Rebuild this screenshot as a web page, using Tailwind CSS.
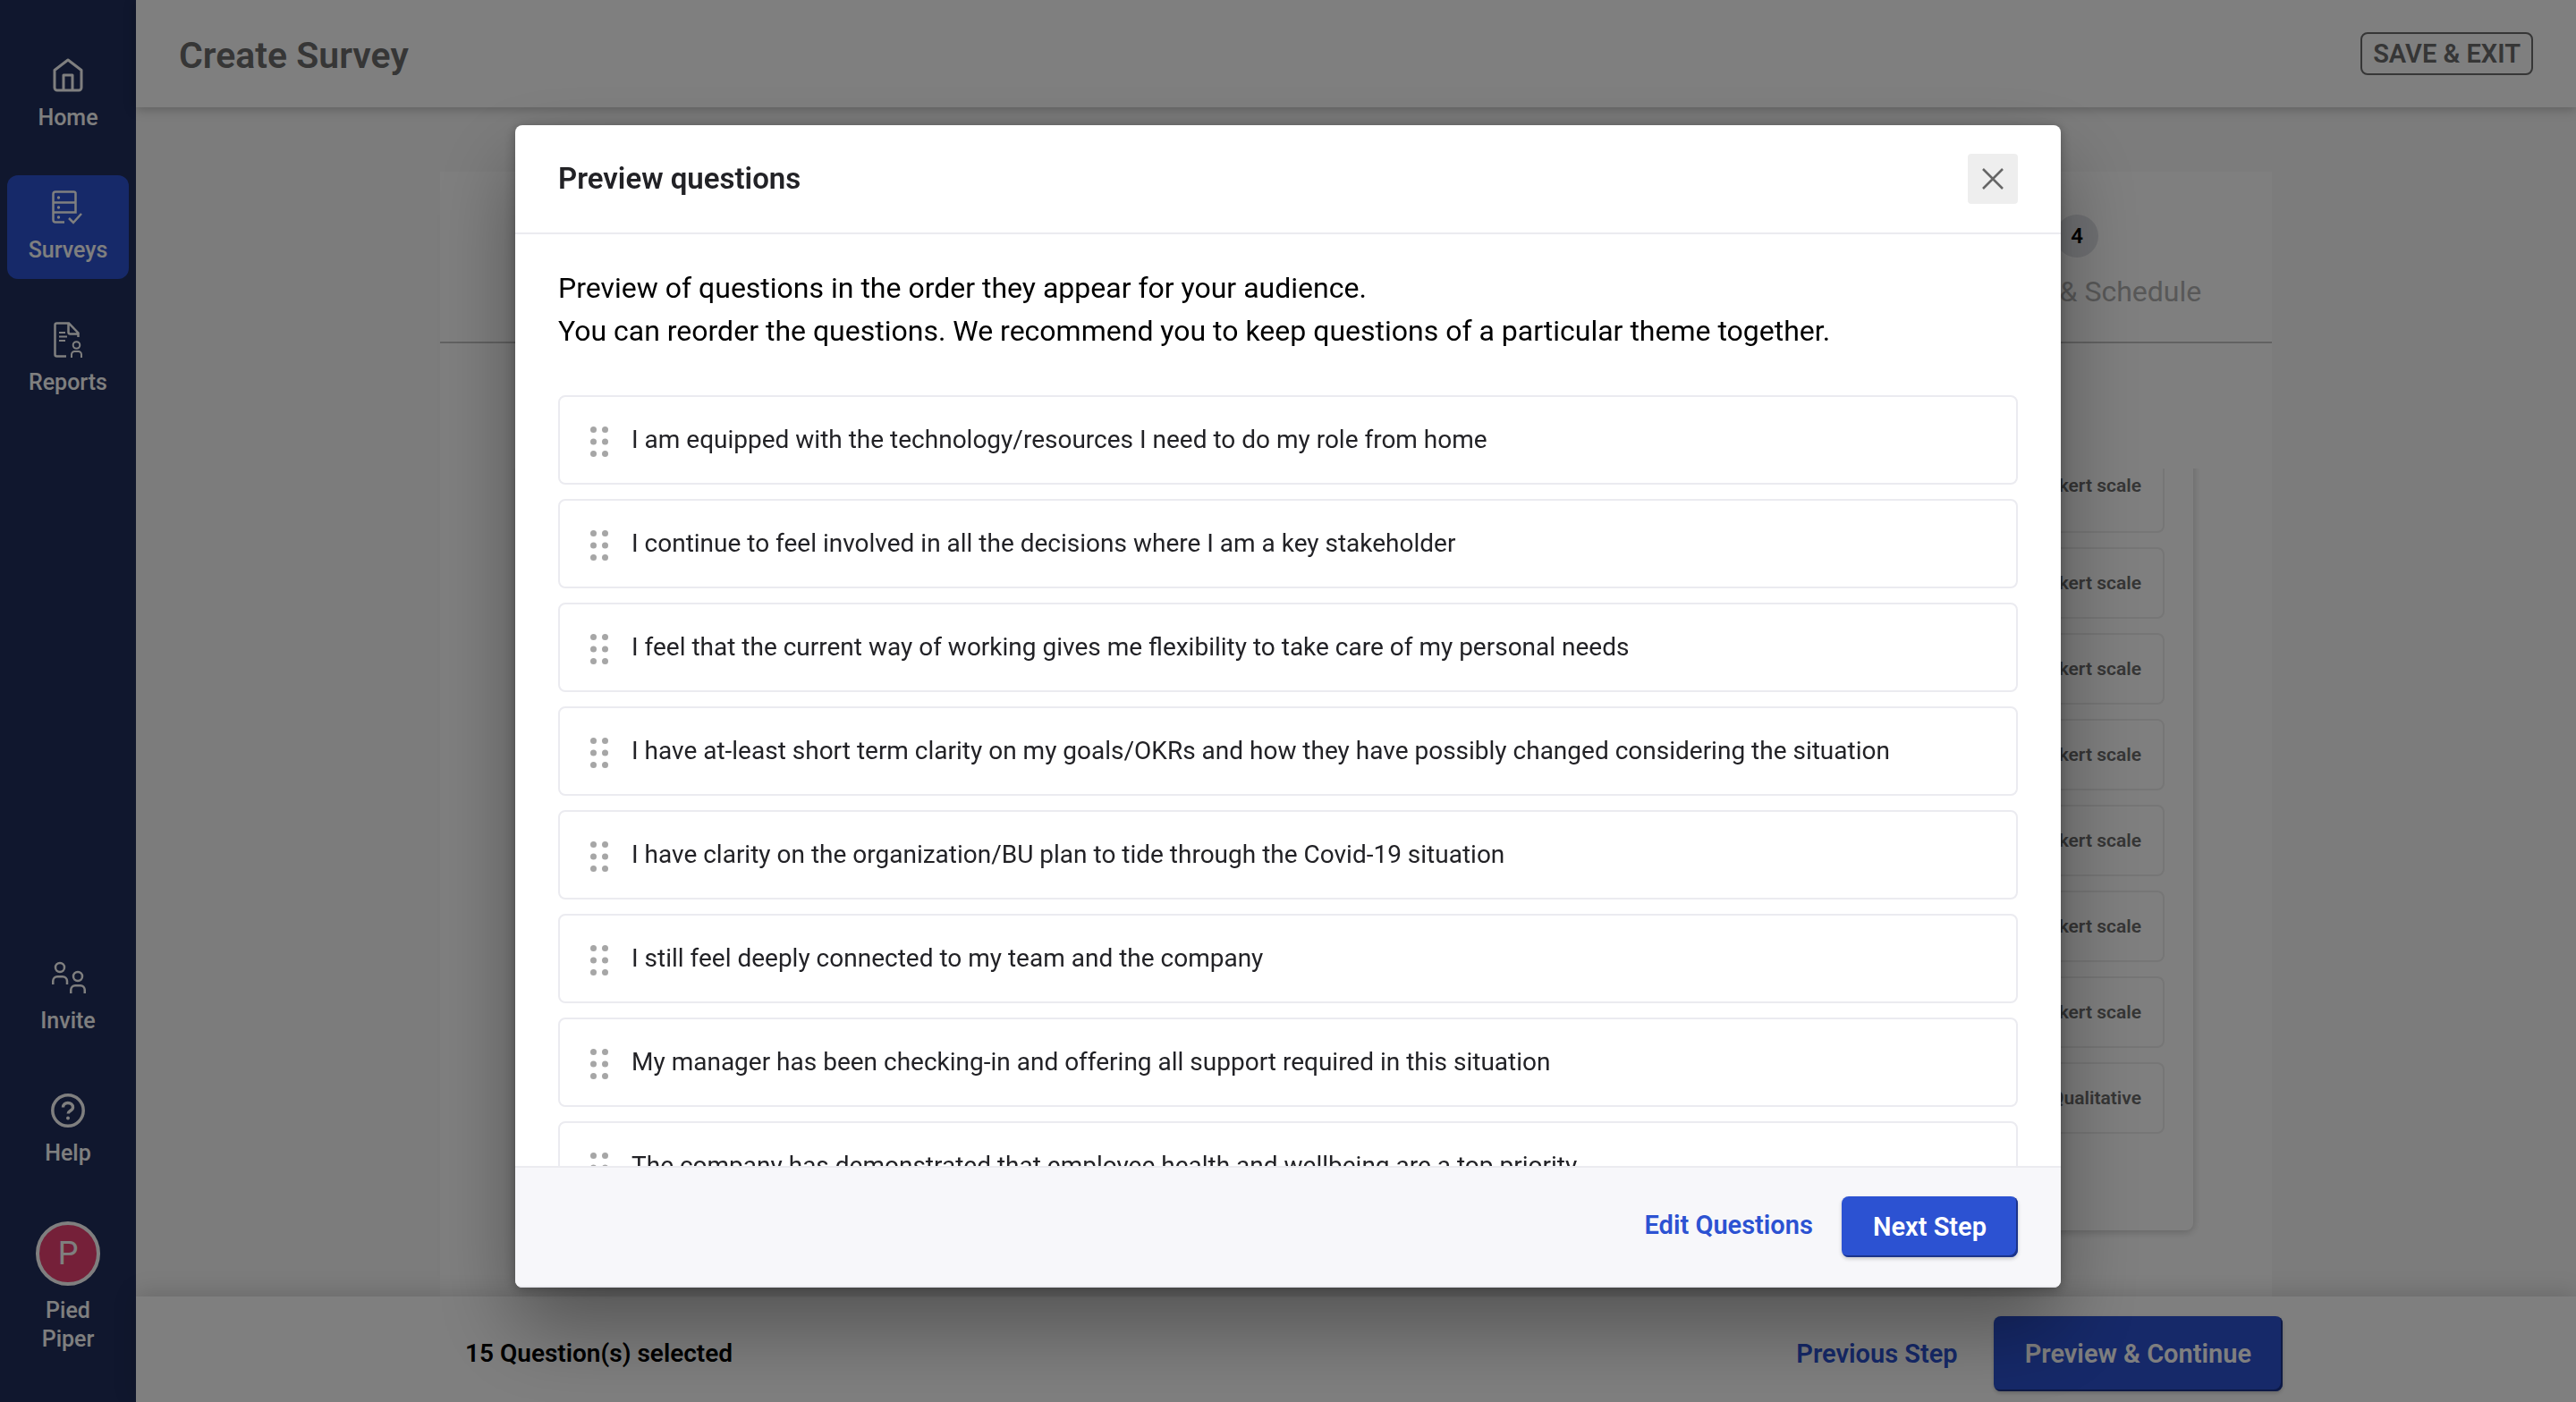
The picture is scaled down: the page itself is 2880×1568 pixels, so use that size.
<!DOCTYPE html>
<html lang="en">
<head>
<meta charset="utf-8">
<title>Create Survey</title>
<script src="https://cdn.jsdelivr.net/npm/@tailwindcss/browser@4"></script>
</head>
<body class="font-[Roboto,sans-serif] text-black">

<div class="flex h-screen overflow-hidden bg-[#f8f8f8]">
  <!-- Sidebar -->
  <nav class="flex w-[152px] shrink-0 flex-col justify-between bg-[#202e5c] px-2 pt-12 pb-[54px] text-center text-[25px] leading-8 font-medium text-white">
    <div class="flex flex-col gap-8">
      <a href="#" class="flex flex-col items-center gap-3 rounded-xl py-4">
        <svg class="size-10" viewBox="0 0 40 40" fill="none" stroke="currentColor" stroke-width="3" stroke-linejoin="round"><path d="M5 14.500 20 3l15 11.500V34a3 3 0 0 1-3 3H8a3 3 0 0 1-3-3zM15 37V20h10v17"/></svg>
        Home
      </a>
      <a href="#" aria-current="page" class="flex flex-col items-center gap-3 rounded-xl bg-[#2c52d2] py-4">
        <svg class="size-10" viewBox="0 0 40 40" fill="none" stroke="currentColor" stroke-width="2.500"><path d="M16 36.500H6a2.500 2.500 0 0 1-2.500-2.500V5A2.500 2.500 0 0 1 6 2.500h20A2 2 0 0 1 28.500 5v20.500H3.500M3.500 14.500h25M21 32l5 5 9-10"/><g fill="currentColor" stroke="none"><circle cx="9.500" cy="9" r="1.700"/><circle cx="9.500" cy="20" r="1.700"/><circle cx="9.500" cy="31" r="1.700"/></g></svg>
        Surveys
      </a>
      <a href="#" class="flex flex-col items-center gap-3 rounded-xl py-4">
        <svg class="size-10" viewBox="0 0 40 40" fill="none" stroke="currentColor" stroke-width="2.500"><path d="M18 38.500H7.500a2 2 0 0 1-2-2v-33a2 2 0 0 1 2-2H21L31.500 12.500V17M20.500 1.500v10a2 2 0 0 0 2 2h9"/><path stroke-width="2" d="M10 12h7M10 16.500h9M10 21h7"/><circle cx="29.500" cy="26" r="3.800" stroke-width="2"/><path stroke-width="2" d="M24 40v-3.500a3.500 3.500 0 0 1 3.500-3.500h4a3.500 3.500 0 0 1 3.500 3.500V40"/></svg>
        Reports
      </a>
    </div>
    <div class="flex flex-col gap-8">
      <a href="#" class="flex flex-col items-center gap-3 rounded-xl py-4">
        <svg class="size-10" viewBox="0 0 40 40" fill="none" stroke="currentColor" stroke-width="2.500"><circle cx="11" cy="8" r="5"/><path d="M3.250 27v-4A5 5 0 0 1 8 18.250h6A5 5 0 0 1 19 23v4"/><circle cx="31" cy="18" r="5"/><path d="M23.250 37v-4A5 5 0 0 1 28 28.250h6A5 5 0 0 1 38.750 33v4"/></svg>
        Invite
      </a>
      <a href="#" class="flex flex-col items-center gap-3 rounded-xl py-4">
        <svg class="size-10" viewBox="0 0 40 40" fill="none" stroke="currentColor" stroke-width="3.500"><circle cx="20" cy="20" r="17.200"/><path d="M14.500 16.500c0-3.200 2.400-5 5.300-5 3.200 0 5.700 1.800 5.700 4.900 0 3.900-5.300 3.700-5.300 7.100" stroke-width="3.400"/><circle cx="20" cy="28.500" r="2" fill="currentColor" stroke="none"/></svg>
        Help
      </a>
      <a href="#" class="flex flex-col items-center gap-3 pt-3">
        <span class="flex size-[72px] items-center justify-center rounded-full border-4 border-white bg-[#ea4072] text-4xl font-normal">P</span>
        <span>Pied<br>Piper</span>
      </a>
    </div>
  </nav>

  <div class="flex min-w-0 flex-1 flex-col">
    <header class="z-10 flex h-[120px] shrink-0 items-center justify-between bg-white px-12 shadow-[0_2px_12px_rgba(0,0,0,0.25)]">
      <h1 class="pt-1 text-[41px] leading-12 font-semibold text-[#6c6c6c]">Create Survey</h1>
      <button type="button" class="h-12 rounded-lg border-2 border-[#6c6c6c] px-3 text-[29px] leading-8 font-semibold text-[#6c6c6c]">SAVE &amp; EXIT</button>
    </header>

    <main class="min-h-0 flex-1 overflow-hidden pt-[72px]">
      <section class="mx-auto h-full max-w-[2048px] bg-white">
        <ol class="flex justify-between border-b-2 border-[#c4c4c4] px-[76px] pt-12 pb-8 text-[32px] leading-12 text-[#b0b0b0]">
          <li class="flex w-[284px] flex-col items-center gap-[14px]"><span class="flex size-12 items-center justify-center rounded-full bg-[#dfe1e6] text-2xl font-semibold text-black">1</span><span>Template</span></li>
          <li class="flex w-[284px] flex-col items-center gap-[14px]"><span class="flex size-12 items-center justify-center rounded-full bg-[#dfe1e6] text-2xl font-semibold text-black">2</span><span>Questions</span></li>
          <li class="flex w-[284px] flex-col items-center gap-[14px]"><span class="flex size-12 items-center justify-center rounded-full bg-[#dfe1e6] text-2xl font-semibold text-black">3</span><span>Audience</span></li>
          <li class="flex w-[284px] flex-col items-center gap-[14px]"><span class="flex size-12 items-center justify-center rounded-full bg-[#dfe1e6] text-2xl font-semibold text-black">4</span><span class="whitespace-nowrap">Preview &amp; Schedule</span></li>
        </ol>
        <div class="mt-[140px] overflow-hidden px-[88px] pb-6">
          <ul id="types" class="-mt-[34px] flex flex-col gap-4 rounded-lg px-8 pb-[108px] text-[21px] leading-6 font-semibold text-[#6c6c6c] shadow-[0_2px_10px_rgba(0,0,0,0.22)]"></ul>
        </div>
      </section>
    </main>

    <footer class="z-10 flex h-[118px] shrink-0 items-center bg-white pt-[10px] pr-[328px] pl-[368px] text-[29px] leading-8 font-semibold shadow-[0_-4px_24px_rgba(0,0,0,0.15)]">
      <p class="text-[28px]">15 Question(s) selected</p>
      <a href="#" class="mr-10 ml-auto text-[#2c52d2]">Previous Step</a>
      <button type="button" class="h-[84px] rounded-lg bg-[#2c52d2] px-[35px] text-white shadow-[inset_-2px_-2px_0_#1b338a,0_2px_4px_rgba(0,0,0,0.2)]">Preview &amp; Continue</button>
    </footer>
  </div>
</div>

<!-- Modal -->
<div class="fixed inset-0 z-20 flex justify-center bg-black/50 pt-[140px] pb-32">
  <div role="dialog" aria-modal="true" aria-labelledby="dialog-title" class="flex w-3/5 flex-col overflow-hidden rounded-lg bg-white shadow-[0_44px_90px_rgba(0,0,0,0.35),0_2px_14px_rgba(0,0,0,0.3)]">
    <header class="flex h-[122px] shrink-0 items-center justify-between border-b-2 border-[#ebebf0] px-12">
      <h2 id="dialog-title" class="text-[33px] leading-10 font-semibold text-[#222226]">Preview questions</h2>
      <button type="button" aria-label="Close" class="flex size-14 items-center justify-center rounded bg-[#eeeeee] text-[#666666]">
        <svg class="size-6" viewBox="0 0 24 24" fill="none" stroke="currentColor" stroke-width="2.500"><path d="m1 1 22 22M23 1 1 23"/></svg>
      </button>
    </header>
    <div class="min-h-0 flex-1 overflow-hidden px-12 pt-9">
      <p class="text-[32px] leading-12">Preview of questions in the order they appear for your audience.<br>You can reorder the questions. We recommend you to keep questions of a particular theme together.</p>
      <ul id="questions" class="mt-12 flex flex-col gap-4 text-[28px] leading-10 text-[#222226]"></ul>
    </div>
    <footer class="flex h-[136px] shrink-0 items-center justify-end gap-8 border-y-2 border-[#ebebf0] bg-[#f7f7fa] px-12 text-[29px] leading-8 font-semibold">
      <a href="#" class="pb-1 text-[#2c52d2]">Edit Questions</a>
      <button type="button" class="h-[68px] rounded-lg bg-[#2c52d2] px-[35px] text-white shadow-[inset_-2px_-2px_0_#1b338a,0_2px_4px_rgba(0,0,0,0.2)]">Next Step</button>
    </footer>
  </div>
</div>

<script>
  const questions = [
    "I am equipped with the technology/resources I need to do my role from home",
    "I continue to feel involved in all the decisions where I am a key stakeholder",
    "I feel that the current way of working gives me flexibility to take care of my personal needs",
    "I have at-least short term clarity on my goals/OKRs and how they have possibly changed considering the situation",
    "I have clarity on the organization/BU plan to tide through the Covid-19 situation",
    "I still feel deeply connected to my team and the company",
    "My manager has been checking-in and offering all support required in this situation",
    "The company has demonstrated that employee health and wellbeing are a top priority"
  ];
  document.getElementById("questions").innerHTML = questions.map(q => `
    <li class="flex h-[100px] shrink-0 items-center gap-[26px] rounded-lg border-2 border-[#ebebf0] px-[34px]">
      <button type="button" aria-label="Reorder" class="text-[#a6a6a6]"><svg class="h-[38px] w-5" viewBox="0 0 20 38" fill="currentColor"><circle cx="3.500" cy="7.500" r="3.500"/><circle cx="16.500" cy="7.500" r="3.500"/><circle cx="3.500" cy="21" r="3.500"/><circle cx="16.500" cy="21" r="3.500"/><circle cx="3.500" cy="34.500" r="3.500"/><circle cx="16.500" cy="34.500" r="3.500"/></svg></button>
      <span>${q}</span>
    </li>`).join("");

  const types = ["Likert scale", "Likert scale", "Likert scale", "Likert scale", "Likert scale", "Likert scale", "Likert scale", "Qualitative"];
  document.getElementById("types").innerHTML = types.map((t, i) => `
    <li class="${i === 0 ? "h-[106px]" : "h-20"} flex shrink-0 items-center justify-end rounded-lg border-2 border-[#ececec] px-6">${t}</li>`).join("");
</script>
</body>
</html>
